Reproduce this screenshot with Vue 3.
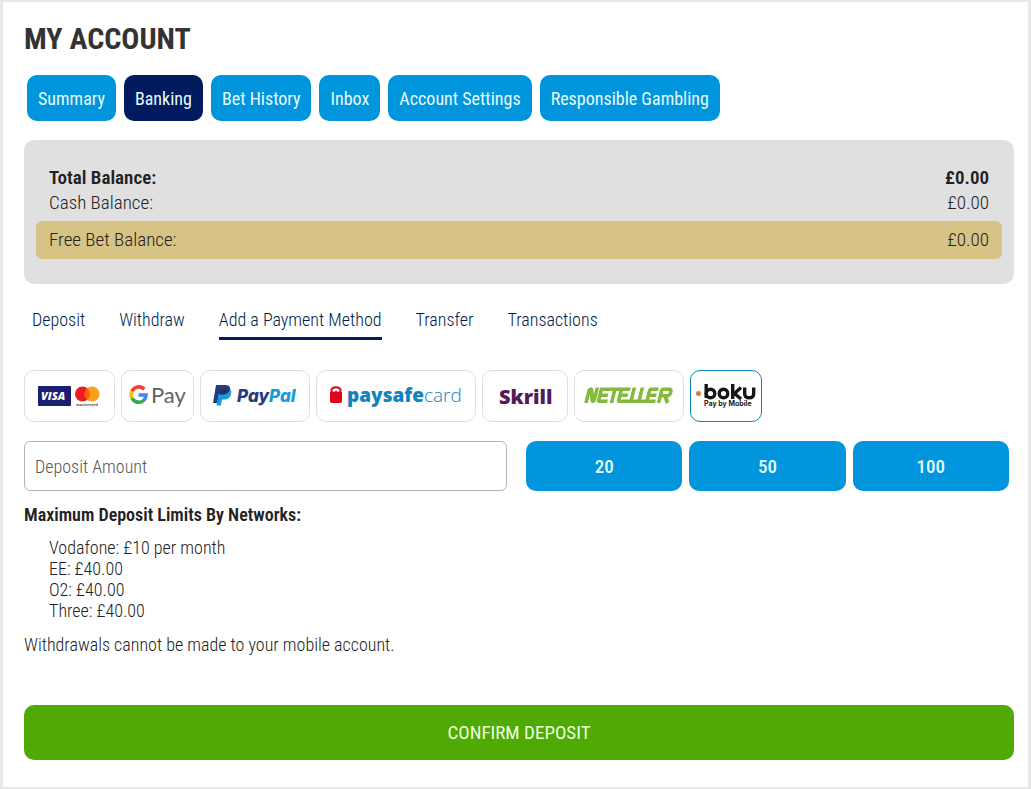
<template>
    <main class="account">
        <h1>MY ACCOUNT</h1>

        <nav class="main-tabs">
            <button
                v-for="tab in tabs"
                :key="tab"
                type="button"
                :class="{ active: tab === activeTab }"
                @click="activeTab = tab">{{ tab }}</button>
        </nav>

        <dl class="balances">
            <div v-for="row in balances" :key="row.label" class="balance" :class="row.type">
                <dt>{{ row.label }}:</dt>
                <dd>{{ row.value }}</dd>
            </div>
        </dl>

        <nav class="sub-tabs">
            <a
                v-for="link in links"
                :key="link"
                href="#"
                :class="{ active: link === activeLink }"
                @click.prevent="activeLink = link">{{ link }}</a>
        </nav>

        <div class="methods">
            <button
                v-for="item in methods"
                :key="item.id"
                type="button"
                class="method"
                :class="{ selected: item.id === method }"
                :aria-label="item.name"
                @click="method = item.id">
                <svg v-if="item.id === 'card'" width="89" height="50" viewBox="0 0 89 50">
                    <rect x="13" y="15" width="33" height="20" rx="1" fill="#1a1f71" />
                    <text x="16" y="29" class="logo visa">VISA</text>
                    <circle cx="57.500" cy="23" r="7.500" fill="#eb1b24" />
                    <circle cx="67" cy="23" r="7.500" fill="#f79e1b" />
                    <path d="M62.200 17.200a7.500 7.500 0 0 1 0 11.600a7.500 7.500 0 0 1 0-11.600z" fill="#ff5f00" />
                    <text x="62" y="35" class="logo mastercard">mastercard</text>
                </svg>

                <svg v-else-if="item.id === 'gpay'" width="71" height="50" viewBox="0 0 71 50">
                    <g fill="none" stroke-width="3.6">
                        <path d="M22.3 18.3A7.4 7.4 0 0 0 10 20.4" stroke="#ea4335" />
                        <path d="M10 20.4a7.4 7.4 0 0 0 0 6.6" stroke="#fbbc04" />
                        <path d="M10 27a7.4 7.4 0 0 0 11.8 2.2" stroke="#34a853" />
                        <path d="M21.8 29.2A7.4 7.4 0 0 0 24 24h-7.4" stroke="#4285f4" />
                    </g>
                    <text x="29" y="32" class="logo gpay">Pay</text>
                </svg>

                <svg v-else-if="item.id === 'paypal'" width="108" height="50" viewBox="0 0 108 50">
                    <path d="M15 14h9c4 0 6 2 5 6c-1 5-4 6-8 6h-3l-1 6h-5z" fill="#253b80" />
                    <path d="M29 18.500c1.500 1 1.500 3 1 4.500c-1 4-3 5.500-7 5.500h-2l-1 6h-4.500l2-11.500h4c4 0 6.500-1.500 7.500-4.500z" fill="#179bd7" />
                    <path d="M19.500 18.500h8.500c-.5 3-3 5-6.500 5h-3z" fill="#222d65" />
                    <text x="36" y="31" class="logo paypal"><tspan fill="#253b80">Pay</tspan><tspan fill="#179bd7">Pal</tspan></text>
                </svg>

                <svg v-else-if="item.id === 'paysafe'" width="158" height="50" viewBox="0 0 158 50">
                    <path d="M14 20a5.200 5.200 0 0 1 10 0" fill="none" stroke="#e2001a" stroke-width="2" />
                    <path d="M15 20h8q2 0 2 2v8q0 2-2 2h-8q-2 0-2-2v-8q0-2 2-2z" fill="#e2001a" />
                    <path d="M16 20.500q3-2 6 0" fill="none" stroke="#fff" />
                    <text x="30" y="31" class="logo paysafe">paysafe<tspan class="thin">card</tspan></text>
                </svg>

                <svg v-else-if="item.id === 'skrill'" width="84" height="50" viewBox="0 0 84 50">
                    <text x="16" y="33" class="logo skrill">Skrill</text>
                </svg>

                <svg v-else-if="item.id === 'neteller'" width="108" height="50" viewBox="0 0 108 50">
                    <g transform="translate(16 0) skewX(-14)" fill="none" stroke="#83ba3b" stroke-width="3.6" stroke-miterlimit="1">
                        <path d="M3 32V18.300H5L9 30.200H10.500V16.500" />
                        <path d="M15 18.300V30.200h9M15 24.300h8M13.200 18.300H44" />
                        <path d="M28.500 18.300V32" />
                        <path d="M35 18.300V30.200H72M35 24.300h8" />
                        <path d="M47.500 16.500V30M55.500 16.500V30" />
                        <path d="M72 18.300h-8.500V30.200M63.500 24.300h8" />
                        <path d="M75.500 32V18.300h7q2.500 0 2.500 3.200t-2.500 3.300h-7M80.500 25l4 7" />
                    </g>
                </svg>

                <svg v-else width="70" height="50" viewBox="0 0 70 50">
                    <circle cx="7.500" cy="22.500" r="2.500" fill="#e57339" />
                    <g fill="none" stroke="#161616" stroke-width="3.400">
                        <path d="M15.200 13v14" />
                        <circle cx="19.500" cy="22.500" r="4.300" />
                        <circle cx="32.500" cy="22.500" r="4.300" />
                        <path d="M41.700 13v15M50 16.500l-6.500 6l6.500 5.500" />
                        <path d="M53.700 16.500v6q0 4.300 4.500 4.300t4.500-4.300v-6" />
                    </g>
                    <text x="13" y="35" class="logo boku">Pay by Mobile</text>
                </svg>
            </button>
        </div>

        <form @submit.prevent>
            <div class="amount-row">
                <input v-model="amount" type="text" placeholder="Deposit Amount" aria-label="Deposit Amount">
                <div class="amounts">
                    <button v-for="n in [20, 50, 100]" :key="n" type="button" @click="amount = n">{{ n }}</button>
                </div>
            </div>

            <h2>Maximum Deposit Limits By Networks:</h2>
            <ul>
                <li v-for="limit in limits" :key="limit">{{ limit }}</li>
            </ul>
            <p>Withdrawals cannot be made to your mobile account.</p>

            <button type="submit" class="confirm">CONFIRM DEPOSIT</button>
        </form>
    </main>
</template>

<script setup>
    import { ref } from 'vue'

    const tabs = ['Summary', 'Banking', 'Bet History', 'Inbox', 'Account Settings', 'Responsible Gambling']
    const activeTab = ref('Banking')

    const balances = [
        { label: 'Total Balance', value: '£0.00', type: 'total' },
        { label: 'Cash Balance', value: '£0.00', type: 'cash' },
        { label: 'Free Bet Balance', value: '£0.00', type: 'free' }
    ]

    const links = ['Deposit', 'Withdraw', 'Add a Payment Method', 'Transfer', 'Transactions']
    const activeLink = ref('Add a Payment Method')

    const methods = [
        { id: 'card', name: 'Visa or Mastercard' },
        { id: 'gpay', name: 'Google Pay' },
        { id: 'paypal', name: 'PayPal' },
        { id: 'paysafe', name: 'paysafecard' },
        { id: 'skrill', name: 'Skrill' },
        { id: 'neteller', name: 'Neteller' },
        { id: 'boku', name: 'Boku Pay by Mobile' }
    ]
    const method = ref('boku')

    const amount = ref('')
    const limits = ['Vodafone: £10 per month', 'EE: £40.00', 'O2: £40.00', 'Three: £40.00']
</script>

<style>
    body {
        background: #fff;
    }
</style>

<style scoped>
    .account {
        box-sizing: border-box;
        min-height: 100vh;
        padding: 19px 14px 26px 21px;
        border: 3px solid #e8e8e8;
        border-top-width: 2px;
        border-bottom-width: 2px;
        color: #222;
        font-family: 'Roboto Condensed', 'Liberation Sans Narrow', Roboto, sans-serif;
        font-size: 18px;
        font-weight: 300;
        line-height: 21px;
    }

    button,
    input {
        box-sizing: border-box;
        margin: 0;
        font: inherit;
    }

    button {
        padding: 0;
        border: 0;
        cursor: pointer;
    }

    h1 {
        margin: 0;
        color: #333;
        font-size: 30px;
        line-height: 36px;
    }

    .main-tabs {
        display: flex;
        gap: 8px;
        margin-top: 18px;
        padding-left: 3px;
    }

    .main-tabs button {
        height: 46px;
        padding: 0 11px;
        border-radius: 10px;
        background: #0095dc;
        color: #e4fbff;
        font-weight: 400;
    }

    .main-tabs .active {
        background: #001c5e;
    }

    .balances {
        margin: 19px 0 0;
        padding: 25px 12px;
        border-radius: 10px;
        background: #e0e0e0;
        font-size: 19px;
    }

    .balance {
        display: flex;
        justify-content: space-between;
        padding: 0 13px;
        line-height: 25px;
    }

    .balance dd {
        margin: 0;
    }

    .total {
        font-weight: 600;
    }

    .free {
        margin-top: 6px;
        border-radius: 6px;
        background: #d7c385;
        line-height: 38px;
    }

    .sub-tabs {
        display: flex;
        gap: 34px;
        margin-top: 25px;
        padding-left: 8px;
    }

    .sub-tabs a {
        padding-bottom: 7px;
        border-bottom: 3px solid transparent;
        color: #001c4a;
        text-decoration: none;
    }

    .sub-tabs .active {
        border-color: #001c5e;
    }

    .methods {
        display: flex;
        flex-wrap: wrap;
        gap: 6px;
        margin-top: 30px;
    }

    .method {
        border: 1px solid #dedede;
        border-radius: 10px;
        background: #fff;
    }

    .method.selected {
        border-color: #0a8cb4;
    }

    .method svg {
        display: block;
    }

    .logo {
        font-family: 'Open Sans', sans-serif;
    }

    .visa {
        fill: #fff;
        font-size: 11px;
        font-style: italic;
        font-weight: 800;
    }

    .mastercard {
        fill: #333;
        font-size: 4px;
        font-weight: 600;
        text-anchor: middle;
    }

    .gpay {
        fill: #5f6368;
        font-family: Lato, sans-serif;
        font-size: 22px;
        font-weight: 400;
    }

    .paypal {
        font-family: Inter, sans-serif;
        font-size: 17px;
        font-style: italic;
        font-weight: 800;
    }

    .paysafe {
        fill: #1284bd;
        font-size: 19px;
        font-weight: 800;
    }

    .thin {
        font-weight: 300;
    }

    .skrill {
        fill: #55195a;
        font-size: 20px;
        font-weight: 800;
    }

    .boku {
        fill: #222;
        font-family: Inter, sans-serif;
        font-size: 7px;
        font-weight: 700;
    }

    .amount-row {
        display: grid;
        grid-template-columns: 1fr 1fr;
        gap: 19px;
        margin-top: 19px;
        padding-right: 5px;
    }

    .amount-row input {
        min-width: 0;
        height: 50px;
        padding: 0 10px;
        border: 1px solid #b4b4b4;
        border-radius: 6px;
        background: #fff;
        color: #333;
    }

    .amount-row input::placeholder {
        color: #555;
    }

    .amounts {
        display: flex;
        gap: 7px;
    }

    .amounts button {
        flex: 1;
        height: 50px;
        border-radius: 10px;
        background: #0095dc;
        color: #e4fbff;
        font-size: 19px;
        font-weight: 500;
    }

    h2 {
        margin: 13px 0 0;
        font-size: 18px;
        font-weight: 600;
        line-height: 21px;
    }

    ul {
        margin: 12px 0 0;
        padding-left: 25px;
        list-style: none;
    }

    p {
        margin: 13px 0 0;
    }

    .confirm {
        width: 100%;
        height: 55px;
        margin-top: 50px;
        border-radius: 10px;
        background: #50aa05;
        color: #edffdc;
        font-size: 19px;
        font-weight: 400;
    }
</style>
